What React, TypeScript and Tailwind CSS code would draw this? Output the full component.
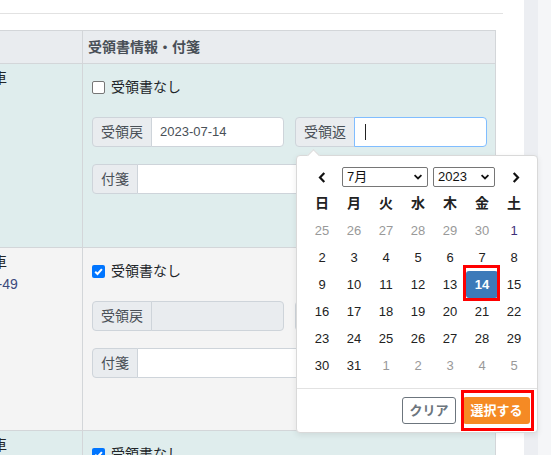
import React from 'react';

const FONT = "font-['Liberation_Sans','Noto_Sans_CJK_JP',sans-serif]";

function Checkbox({ checked }: { checked: boolean }) {
  return (
    <span
      className={`flex h-[13px] w-[13px] items-center justify-center rounded-[2px] ${
        checked ? 'bg-[#0075ff]' : 'border border-[#767676] bg-white'
      }`}
    >
      {checked && (
        <svg viewBox="0 0 12 12" className="h-[11px] w-[11px]">
          <path d="M2.4 6.3 L4.9 8.7 L9.7 3.4" fill="none" stroke="white" strokeWidth="2.2" />
        </svg>
      )}
    </span>
  );
}

interface GroupProps {
  label: string;
  value?: string;
  state?: 'normal' | 'focus' | 'disabled';
  className?: string;
}

const InputGroup: React.FC<GroupProps> = ({ label, value, state = 'normal', className = 'w-[192px]' }) => {
  const box =
    state === 'focus'
      ? 'border-[#80bdff] bg-white'
      : state === 'disabled'
        ? 'border-[#ced4da] bg-[#e9ecef]'
        : 'border-[#ced4da] bg-white';
  return (
    <div className={`flex h-[30px] ${className}`}>
      <span className="flex items-center rounded-l-[4px] border border-[#ced4da] bg-[#e9ecef] px-2 text-[14px] text-[#495057]">
        {label}
      </span>
      <div className={`-ml-px flex flex-1 items-center rounded-r-[4px] border px-2 text-[13px] text-[#495057] ${box}`}>
        {value}
        {state === 'focus' && <span className="ml-[2px] h-[16px] w-px bg-[#222]" />}
      </div>
    </div>
  );
};

interface RowProps {
  bg: string;
  height: string;
  checked: boolean;
  second?: boolean;
  children?: React.ReactNode;
}

const Row: React.FC<RowProps> = ({ bg, height, checked, second, children }) => (
  <div className={`flex border-b border-[#d3d6d9] ${bg} ${height}`}>
    <div className="w-[83px] overflow-hidden border-r border-[#d3d6d9] pt-[4px] text-[14px] whitespace-nowrap text-[#212529]">
      <div className="-ml-[35px] leading-[20px]">自動車</div>
      {second && <div className="-ml-[18px] mt-[2px] leading-[20px] text-[#3c4a7c]">12-49</div>}
    </div>
    <div className="flex-1 pl-[9px] pt-[13px]">
      <div className="flex h-[20px] items-center gap-[6px] text-[14px] text-[#212529]">
        <Checkbox checked={checked} />
        <span>受領書なし</span>
      </div>
      {children}
    </div>
  </div>
);

const weeks: { d: number; muted?: boolean }[][] = [
  [25, 26, 27, 28, 29, 30].map((d) => ({ d, muted: true })).concat([{ d: 1, muted: false }]),
  [2, 3, 4, 5, 6, 7, 8].map((d) => ({ d })),
  [9, 10, 11, 12, 13, 14, 15].map((d) => ({ d })),
  [16, 17, 18, 19, 20, 21, 22].map((d) => ({ d })),
  [23, 24, 25, 26, 27, 28, 29].map((d) => ({ d })),
  [{ d: 30 }, { d: 31 }].concat([1, 2, 3, 4, 5].map((d) => ({ d, muted: true }))),
];

const Chevron = ({ dir }: { dir: 'left' | 'right' | 'down' }) => {
  if (dir === 'down')
    return (
      <svg viewBox="0 0 10 7" className="h-[6px] w-[10px]">
        <path d="M1 1.2 L5 5.2 L9 1.2" fill="none" stroke="#111" strokeWidth="2" />
      </svg>
    );
  return (
    <svg viewBox="0 0 8 12" className="h-[11px] w-[8px]">
      <path
        d={dir === 'left' ? 'M6.5 1 L1.8 6 L6.5 11' : 'M1.5 1 L6.2 6 L1.5 11'}
        fill="none"
        stroke="#111"
        strokeWidth="2.4"
      />
    </svg>
  );
};

function DatePicker() {
  return (
    <div className="absolute left-[296px] top-[155px] w-[242px] rounded-[4px] border border-[#d9d9d9] bg-white shadow-[0_2px_6px_rgba(0,0,0,0.08)]">
      <div className="absolute -top-[5px] left-[12px] h-[9px] w-[9px] rotate-45 border-l border-t border-[#d9d9d9] bg-white" />
      <div className="pl-[9px] pt-[11px]">
        <div className="flex h-[20px] w-[224px] items-center">
          <div className="flex w-[32px] justify-center">
            <Chevron dir="left" />
          </div>
          <div className="ml-[4px] flex h-[20px] w-[86px] items-center justify-between rounded-[2px] border border-[#767676] pl-[4px] pr-[4px] text-[13px] text-[#111]">
            <span>7月</span>
            <Chevron dir="down" />
          </div>
          <div className="ml-[5px] flex h-[20px] w-[62px] items-center justify-between rounded-[2px] border border-[#767676] pl-[4px] pr-[4px] text-[13px] text-[#111]">
            <span>2023</span>
            <Chevron dir="down" />
          </div>
          <div className="ml-[17px] flex">
            <Chevron dir="right" />
          </div>
        </div>
        <div className="mt-[3px] grid w-[224px] grid-cols-7">
          {['日', '月', '火', '水', '木', '金', '土'].map((w) => (
            <div key={w} className="flex h-[27px] items-center justify-center text-[14px] font-bold text-[#222]">
              {w}
            </div>
          ))}
          {weeks.flat().map((c, i) => {
            const selected = i === 19;
            return (
              <div key={i} className="relative flex h-[27px] items-center justify-center text-[13px]">
                {selected ? (
                  <>
                    <span className="flex h-full w-full items-center justify-center rounded-[3px] bg-[#3d7ab9] font-bold text-white">
                      {c.d}
                    </span>
                    <span className="absolute -bottom-[3px] -left-[3px] -right-[2px] -top-[6px] border-[3px] border-[#f00]" />
                  </>
                ) : (
                  <span className={c.muted ? 'text-[#999]' : i === 6 ? 'text-[#3d2f7a]' : 'text-[#222]'}>{c.d}</span>
                )}
              </div>
            );
          })}
        </div>
      </div>
      <div className="mt-[9px] flex justify-end gap-[7px] border-t border-[#e2e2e2] pb-[8px] pr-[7px] pt-[8px]">
        <button className="flex h-[27px] w-[54px] items-center justify-center rounded-[3px] border border-[#6c757d] bg-white text-[13px] font-bold text-[#6c757d]">
          クリア
        </button>
        <div className="relative">
          <button className="flex h-[27px] w-[67px] items-center justify-center rounded-[3px] bg-[#f58a24] text-[13px] font-bold text-white">
            選択する
          </button>
          <span className="absolute -bottom-[7px] -left-[2px] -right-[4px] -top-[7px] border-[3px] border-[#f00]" />
        </div>
      </div>
    </div>
  );
}

export default function App() {
  return (
    <div className={`relative flex h-[455px] w-[551px] overflow-hidden bg-white ${FONT}`}>
      <div className="w-[524px] overflow-hidden">
        <div className="h-[14px] w-[503px] border-b border-[#e2e2e2]" />
        <div className="mt-[16px] w-[496px] border-r border-t border-[#d3d6d9]">
          <div className="flex h-[33px] border-b border-[#d3d6d9] bg-[#e9ecef]">
            <div className="w-[83px] border-r border-[#d3d6d9]" />
            <div className="flex flex-1 items-center pl-[5px] text-[14px] font-bold text-[#495057]">受領書情報・付箋</div>
          </div>
          <Row bg="bg-[#dfeded]" height="h-[184px]" checked={false}>
            <div className="mt-[20px] flex gap-[11px]">
              <InputGroup label="受領戻" value="2023-07-14" />
              <InputGroup label="受領返" state="focus" />
            </div>
            <InputGroup label="付箋" className="mt-[17px] w-[395px]" />
          </Row>
          <Row bg="bg-[#f4f4f4]" height="h-[183px]" checked second>
            <div className="mt-[20px] flex gap-[11px]">
              <InputGroup label="受領戻" state="disabled" />
              <InputGroup label="受領返" state="disabled" />
            </div>
            <InputGroup label="付箋" className="mt-[17px] w-[395px]" />
          </Row>
          <Row bg="bg-[#dfeded]" height="h-[60px]" checked />
        </div>
      </div>
      <div className="w-[14px] bg-[#eceef2]" />
      <div className="flex-1 bg-[#f5f6f8]" />
      <DatePicker />
    </div>
  );
}
